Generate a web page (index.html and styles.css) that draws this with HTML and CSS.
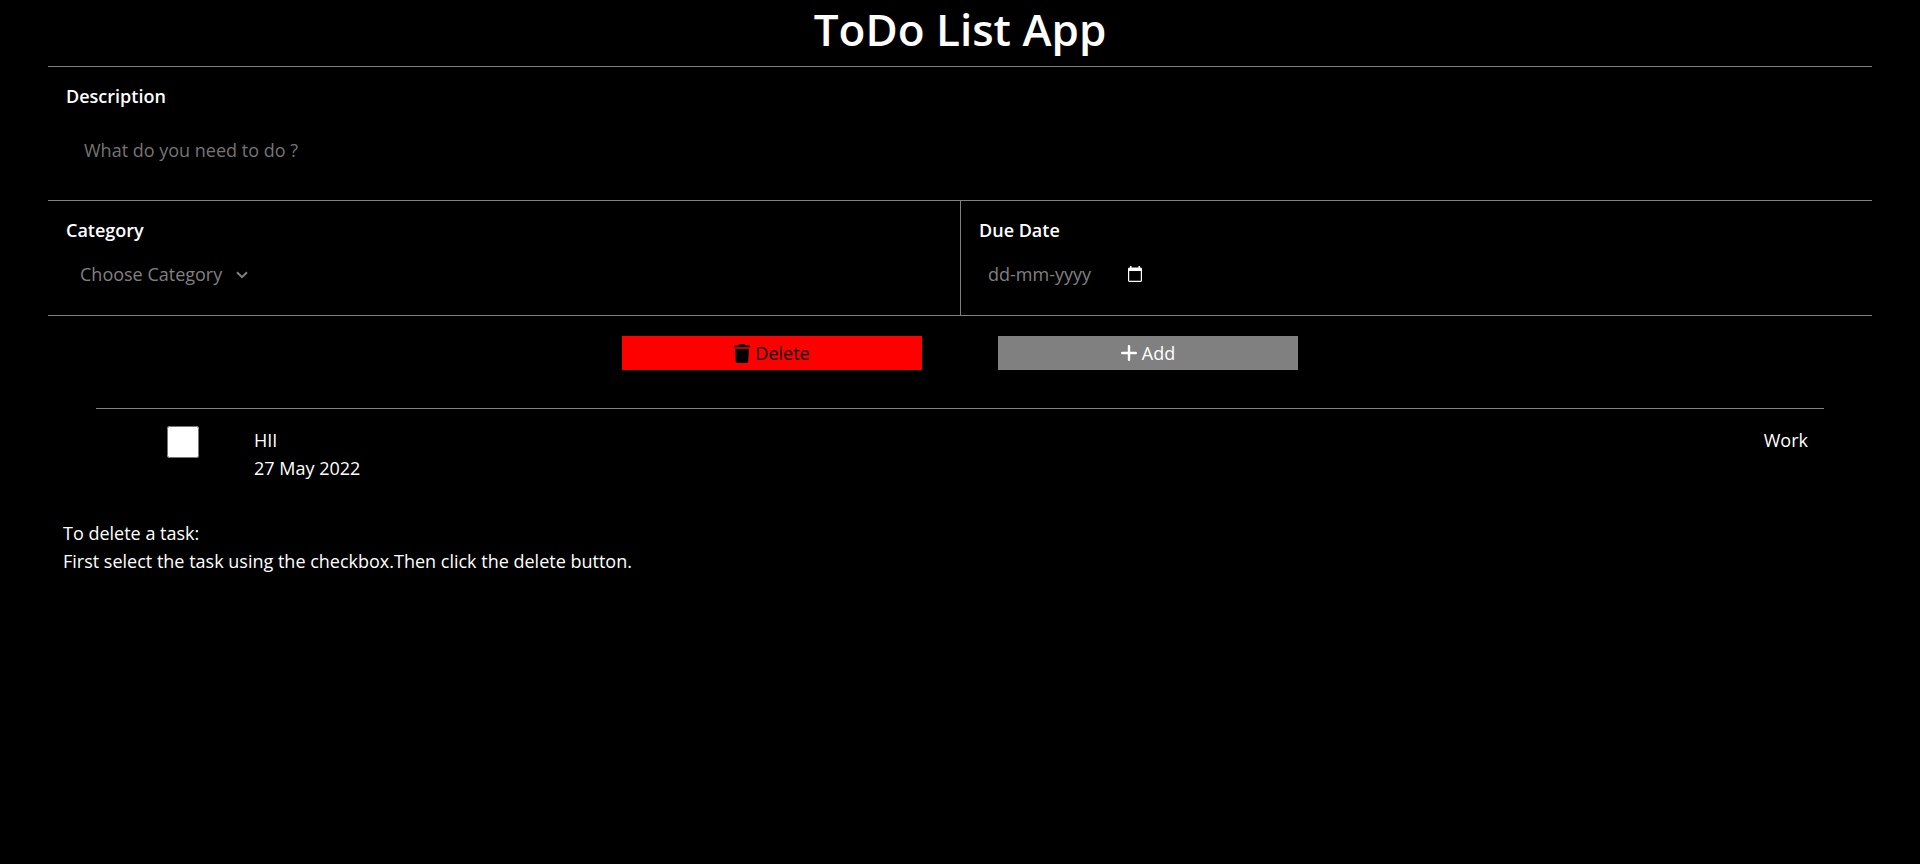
FILE: index.html
```html
<!DOCTYPE html>
<html lang="en">
<head>
  <meta charset="utf-8">
  <meta name="viewport" content="width=device-width, initial-scale=1">
  <title>ToDo List App</title>
  <link rel="stylesheet" href="styles.css">
</head>
<body>
  <main class="app">
    <h1 class="title">ToDo List App</h1>
    <form class="task-form">
      <div class="field field-description">
        <label class="label" for="description">Description</label>
        <input class="description-input" id="description" type="text" placeholder="What do you need to do ?">
      </div>
      <div class="row">
        <div class="field">
          <label class="label" for="category">Category</label>
          <div class="category">
            <select class="category-select" id="category">
              <option>Choose Category</option>
              <option>Work</option>
            </select>
            <svg class="category-arrow" width="12" height="8" viewBox="0 0 12 8" fill="none" stroke="currentColor" stroke-width="2"><path d="M1 1.200l5 5 5-5"/></svg>
          </div>
        </div>
        <div class="field field-date">
          <label class="label" for="date">Due Date</label>
          <div class="date">
            <input class="date-input" id="date" type="text" placeholder="dd-mm-yyyy">
            <button class="date-button" type="button" aria-label="Open calendar">
              <svg width="14" height="17" viewBox="0 0 14 17" fill="#fff"><path fill-rule="evenodd" d="M2 0h1.500v1.500h7V0H12v1.500h1l1 1V15l-1 1H1l-1-1V2.500l1-1h1zM1.200 5v9.800h11.600V5z"/></svg>
            </button>
          </div>
        </div>
      </div>
      <div class="actions">
        <button class="action action-delete" type="button">
          <svg width="16" height="19" viewBox="0 0 16 19" fill="currentColor"><path d="M5.500 0h5l.7 1.200H15c.7 0 1 .3 1 .8v1.300H0V2c0-.5.300-.8 1-.8h3.800zM1 4.800h14l-.8 12.600c-.1 1-.8 1.600-1.700 1.600h-9c-.9 0-1.600-.6-1.700-1.600z"/></svg>
          Delete
        </button>
        <button class="action action-add" type="button">
          <svg width="16" height="16" viewBox="0 0 16 16" fill="none" stroke="currentColor" stroke-width="2.400" stroke-linecap="round"><path d="M8 1.200v13.600M1.200 8h13.600"/></svg>
          Add
        </button>
      </div>
    </form>
    <ul class="tasks">
      <li class="task">
        <input class="task-check" id="task-1" type="checkbox">
        <label class="task-text" for="task-1">HII<br>27 May 2022</label>
        <span class="task-category">Work</span>
      </li>
    </ul>
    <p class="note">To delete a task:<br>First select the task using the checkbox.Then click the delete button.</p>
  </main>
</body>
</html>
```
FILE: styles.css
```css
* {
  box-sizing: border-box;
}

body {
  margin: 0;
  background: #000;
  color: #fff;
  font-family: "Segoe UI", "Open Sans", sans-serif;
  font-size: 18px;
  line-height: 28px;
}

input,
select,
button {
  margin: 0;
  border: 0;
  padding: 0;
  background: #000;
  color: gray;
  font: inherit;
}

.app {
  width: 95%;
  margin: 0 auto;
}

.title {
  margin: 0;
  padding: 1px 0 9px;
  font-size: 44px;
  font-weight: 600;
  line-height: 56px;
  text-align: center;
}

.field {
  display: flex;
  flex-direction: column;
  align-items: flex-start;
  padding: 15px 18px 16px;
  border-top: 1px solid gray;
}

.field-description {
  padding-bottom: 22px;
}

.label {
  font-weight: 600;
}

.description-input {
  width: 100%;
  height: 56px;
  margin-top: 12px;
  padding: 0 18px;
}

.description-input::placeholder {
  color: #757575;
}

.row {
  display: grid;
  grid-template-columns: 1fr 1fr;
  border-bottom: 1px solid gray;
}

.category,
.date {
  display: flex;
  align-items: center;
  height: 30px;
  margin: 15px 0 10px 9px;
}

.category {
  position: relative;
}

.category-select {
  width: 176px;
  height: 30px;
  padding-left: 5px;
  appearance: none;
}

.category-arrow {
  position: absolute;
  top: 12px;
  right: 3px;
  color: gray;
  pointer-events: none;
}

.field-date {
  border-left: 1px solid gray;
}

.date-input {
  width: 140px;
}

.date-input::placeholder {
  color: gray;
}

.date-button {
  display: flex;
}

.actions {
  display: flex;
  justify-content: center;
  gap: 76px;
  margin: 20px 0 38px;
}

.action {
  display: flex;
  align-items: center;
  justify-content: center;
  gap: 5px;
  width: 300px;
  height: 34px;
}

.action-delete {
  background: red;
  color: #000;
}

.action-add {
  background: gray;
  color: #fff;
}

.tasks {
  margin: 0 48px;
  padding: 0;
  border-top: 1px solid gray;
  list-style: none;
}

.task {
  display: flex;
  align-items: flex-start;
  padding: 17px 16px 0 71px;
}

.task-check {
  width: 32px;
  height: 32px;
}

.task-text {
  margin-left: 55px;
}

.task-category {
  margin-left: auto;
}

.note {
  margin: 37px 15px;
}
```
